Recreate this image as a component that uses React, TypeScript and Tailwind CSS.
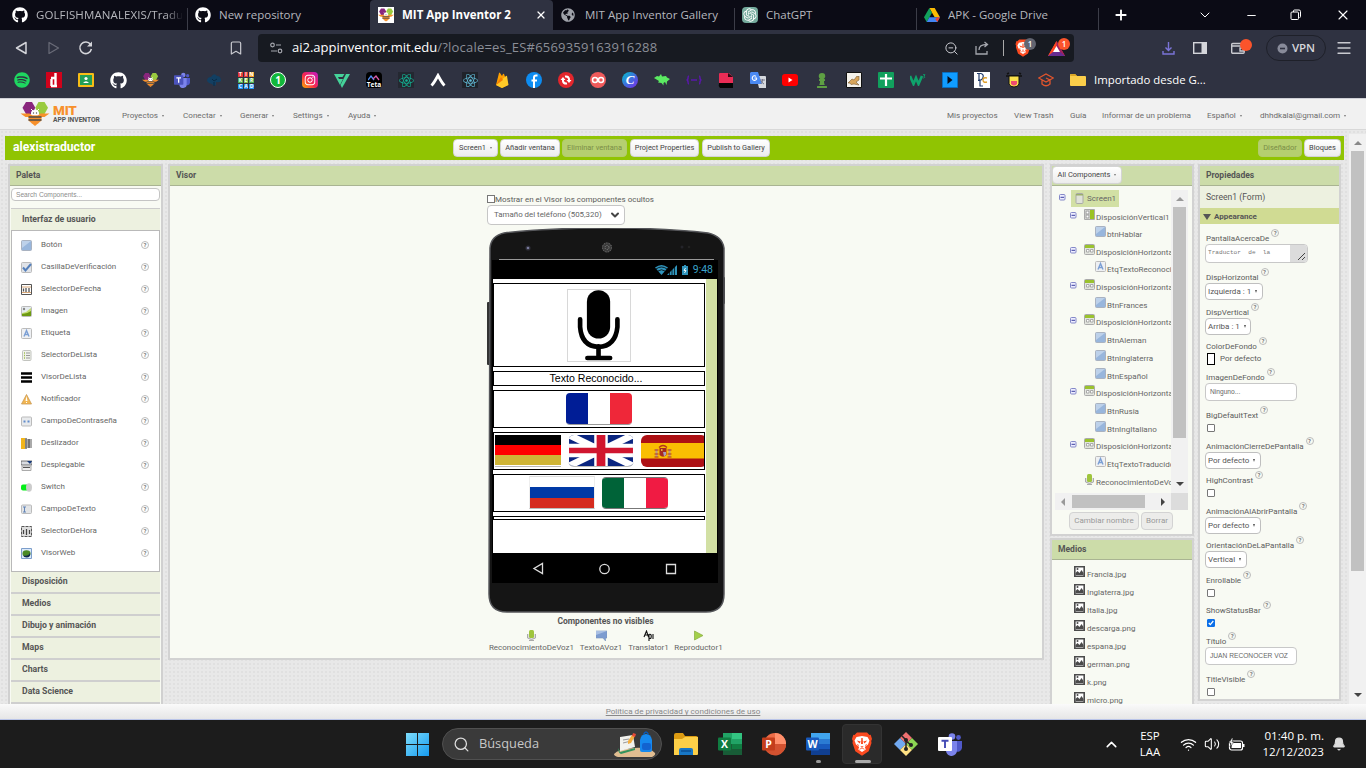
import React from "react";
import type { ReactNode } from "react";
import { FaGithub, FaSpotify, FaReact, FaInstagram, FaChessPawn, FaGlobeAmericas } from "react-icons/fa";
import { RiOpenaiFill } from "react-icons/ri";
import { Bookmark, ChevronDown, ChevronUp, ZoomOut, Bell, Wifi, Volume2, Plus, Minus, X, Menu, Search } from "lucide-react";

const ui = "font-['Open_Sans','Noto_Sans',sans-serif]";

function Lion({ size }: { size: number }) {
  return (
    <svg width={size} height={size} viewBox="0 0 24 24">
      <path d="M7 .5h10l2.500 2.500 1.200-.2L22 7l-.8 2 .3 2-2.800 8.200L12 23.800l-6.700-4.600L2.500 11l.3-2L2 7l1.300-4.200L4.500 3z" fill="#fb4a20" />
      <path d="M6.500 5L12 4l5.500 1 2 3.500-1.500 4-3.200 2.500 1 2.500L12 20l-3.800-2.500 1-2.500L6 12.500 4.500 8.500z" fill="#fff" />
      <path d="M6.800 8.600l4 1-1.300 1.900zM17.200 8.600l-4 1 1.300 1.900zM10.300 14.300h3.400L12 15.700zM11.300 6h1.400l.3 6h-2z" fill="#fb4a20" />
      <path d="M9.500 17.300L12 16l2.500 1.300M7 12.500l2 1M17 12.500l-2 1" stroke="#fb4a20" strokeWidth=".8" fill="none" />
    </svg>
  );
}

function Bee({ w, h }: { w: number; h: number }) {
  return (
    <svg width={w} height={h} viewBox="0 0 29 24">
      <path d="M5.500 0h6l3.300 5.800L11.500 12h-6L2 5.800z" fill="#89267d" />
      <path d="M18 0h6l3.500 5.800L24 12h-6l-3.200-6.200z" fill="#99cb3f" />
      <path d="M0 11.500h9l3 2h5l3-2h9l-5 3.500H5z" fill="#f7902b" />
      <path d="M10.500 12q-.5-4 4-4t4 4l-1.500 1.500h-5z" fill="#fff" />
      <path d="M10.500 7l2 2M18.500 7l-2 2" stroke="#fff" />
      <circle cx="13" cy="11" r=".7" fill="#555" />
      <circle cx="16" cy="11" r=".7" fill="#555" />
      <path d="M8 13.500h13v5l-3.500 3h-6L8 18.500z" fill="#f7902b" />
      <path d="M8 15h13M8 18h13" stroke="#4b4b4b" strokeWidth="1.400" />
      <path d="M11 21h7l-3.500 3z" fill="#f7902b" />
    </svg>
  );
}

function Teams({ size, white = false }: { size: number; white?: boolean }) {
  return (
    <svg width={size} height={size} viewBox="0 0 24 24">
      <circle cx="14" cy="4.500" r="3.300" fill="#7b83eb" />
      <circle cx="20.500" cy="5.500" r="2.400" fill="#5059c9" />
      <path d="M16 9h8v7a4.500 4.500 0 0 1-7 3z" fill="#5059c9" />
      <path d="M8 9h11v9a5.500 5.500 0 0 1-11 1z" fill="#7b83eb" />
      <rect x="0" y="5" width="14" height="14" rx="1" fill={white ? "#fff" : "#4b53bc"} />
      <path d="M3.500 8.800h7M7 8.800v7.200" stroke={white ? "#444bb5" : "#fff"} strokeWidth="1.900" />
    </svg>
  );
}

function Badge({ c, children }: { c: string; children: ReactNode }) {
  return <span className={`absolute flex h-3 w-3 items-center justify-center rounded-full text-[8px] font-semibold leading-none text-white ${c}`}>{children}</span>;
}

function Tab({ w, icon, label, active = false, line = true }: { w: string; icon: ReactNode; label: string; active?: boolean; line?: boolean }) {
  return (
    <div className={`relative flex h-[30px] shrink-0 items-center overflow-hidden ${w} ${active ? "rounded-t bg-[#2f3241] font-bold text-white" : "text-[#b6b7bd]"}`}>
      <span className="flex w-6 shrink-0 items-center">{icon}</span>
      <span className="flex-1 overflow-hidden whitespace-nowrap text-[11.5px] leading-[30px]">{label}</span>
      {active && <X size={12} strokeWidth={2.500} className="mr-[6px]" />}
      {line && <span className="mt-2 h-[23px] w-px bg-[#3c3d48]" />}
    </div>
  );
}

function Tabs() {
  return (
    <div className="flex h-[30px] bg-[#0b0b15]">
      <Tab w="w-[188px] pl-3 [&>span:nth-child(2)]:mr-1 [&>span:nth-child(2)]:tracking-[0.1px] [&>span:nth-child(2)]:[mask-image:linear-gradient(90deg,#000_88%,transparent)]" icon={<FaGithub size={16} color="#fff" />} label="GOLFISHMANALEXIS/Traductor" />
      <Tab w="w-[182px] pl-[7px]" icon={<FaGithub size={16} color="#fff" />} label="New repository" line={false} />
      <Tab w="w-[183px] pl-2" icon={<span className="bg-white"><Bee w={16} h={16} /></span>} label="MIT App Inventor 2" active line={false} />
      <Tab w="w-[182px] pl-[8px]" icon={<FaGlobeAmericas size={14} color="#9fa2aa" />} label="MIT App Inventor Gallery" />
      <Tab w="w-[182px] pl-[7px]" icon={<span className="rounded bg-[#74aa9c]"><RiOpenaiFill size={16} color="#fff" /></span>} label="ChatGPT" />
      <Tab
        w="w-[182px] pl-[7px]"
        icon={
          <svg width="16" height="14" viewBox="0 0 24 21">
            <path d="M8 0h8l8 14h-8z" fill="#fbbc04" />
            <path d="M8 0l4 7-8 14-4-7z" fill="#12a05c" />
            <path d="M8 14h16l-4 7H4z" fill="#4285f4" />
            <path d="M20 14h4l-4 7-3-4z" fill="#ea4335" />
          </svg>
        }
        label="APK - Google Drive"
      />
      <div className="flex items-center pl-[14px] text-white">
        <Plus size={16} strokeWidth={2.800} className="mr-[68px]" />
        <ChevronDown size={16} className="mr-[32px]" strokeWidth={1.500} />
        <Minus size={13} className="mr-[32px]" strokeWidth={1.800} />
        <svg width="12" height="12" viewBox="0 0 12 12" fill="none" stroke="#fff" className="mr-[33px]">
          <rect x="1" y="3" width="7.500" height="7.500" rx="1" />
          <path d="M3.500 3V2q0-1 1-1H9q1.500 0 1.500 1.500v5q0 1-1 1" />
        </svg>
        <X size={16} strokeWidth={1.700} />
      </div>
    </div>
  );
}

function Toolbar() {
  return (
    <div className="flex h-9 items-center bg-[#2f3241] text-[#c9cad0]">
      <svg width="100" height="16" viewBox="0 0 100 16" fill="none" className="shrink-0">
        <path d="M26 2.500v11L16.500 8z" stroke="#d4d5da" strokeWidth="1.500" strokeLinejoin="round" />
        <path d="M49 2.500v11L58.500 8z" stroke="#6a6c78" strokeWidth="1.200" strokeLinejoin="round" />
        <path d="M90.500 4.500a5.800 5.800 0 1 0 .9 4.500" stroke="#d4d5da" strokeWidth="1.500" />
        <path d="M92 1.500v5h-5z" fill="#d4d5da" />
      </svg>
      <Bookmark size={16} strokeWidth={1.800} className="ml-[128px] mr-[14px] shrink-0" />
      <div className="flex h-[28px] w-[816px] shrink-0 items-center rounded bg-[#171a21]">
        <svg width="13" height="12" viewBox="0 0 13 12" fill="none" stroke="#a4a6ad" strokeWidth="1.200" className="ml-3">
          <circle cx="2.500" cy="3" r="1.800" />
          <path d="M6 3h5M1 9h6" />
          <circle cx="10" cy="9" r="1.800" />
        </svg>
        <div className="ml-[9px] w-[642px] whitespace-nowrap text-[13px] text-[#8b8e97]">
          <span className="text-white">ai2.appinventor.mit.edu</span>
          <span className="tracking-[0.2px]">/?locale=es_ES#6569359163916288</span>
        </div>
        <ZoomOut size={15} className="ml-[10px]" strokeWidth={1.600} />
        <svg width="15" height="14" viewBox="0 0 15 14" fill="none" stroke="#a4a6ad" strokeWidth="1.300" className="ml-[16px]">
          <path d="M1 5v8h11v-3M4 9c0-4 3-5.500 8-5.500M9.500 1l3 2.500-3 2.500" />
        </svg>
        <span className="ml-[13px] h-4 w-px bg-[#aaa]" />
        <span className="relative ml-[10px] w-[18px]"><Lion size={18} /><Badge c="left-[10px] -top-px bg-[#626571]">1</Badge></span>
        <span className="relative ml-[16px] w-[17px]">
          <svg width="17" height="15" viewBox="0 0 17 15">
            <path d="M8.500 0L17 15H0z" fill="#ff4724" />
            <path d="M8.500 0L17 15H0l8.500-5z" fill="#9e1f63" />
            <path d="M8.500 0L0 15l5-4z" fill="#ff4724" />
            <path d="M0 15h17l-5-4H5z" fill="#662d91" />
            <path d="M8.500 5l3.500 6H5z" fill="#fff" />
          </svg>
          <Badge c="left-[10px] -top-[3px] bg-[#fb542b]">1</Badge>
        </span>
      </div>
      <svg width="13" height="13" viewBox="0 0 13 13" fill="none" stroke="#7b74d8" strokeWidth="1.400" className="ml-[88px] shrink-0">
        <path d="M6.500 0v8M3.500 5.500l3 3 3-3M1 9v3h11V9" />
      </svg>
      <svg width="14" height="12" viewBox="0 0 14 12" className="ml-[18px] shrink-0">
        <rect x=".7" y=".7" width="12.600" height="10.600" fill="none" stroke="#d4d5da" strokeWidth="1.400" />
        <path d="M8.500 1h5v10h-5z" fill="#d4d5da" />
      </svg>
      <span className="relative ml-[24px] shrink-0">
        <svg width="14" height="12" viewBox="0 0 14 12" fill="none" stroke="#c9cad0" strokeWidth="1.400">
          <rect x=".7" y="1.500" width="12.500" height="9.800" rx="1" />
          <path d="M1 4h12M13 6H9v3h4" />
        </svg>
        <span className="absolute -top-[3px] left-[9px] h-3 w-3 rounded-full bg-[#fb542b]" />
      </span>
      <span className="ml-[21px] flex h-[26px] w-[60px] shrink-0 items-center justify-center gap-1 rounded-full border border-[#1e2029] text-[11.500px] font-semibold text-[#d7d8dc]">
        <svg width="11" height="11" viewBox="0 0 11 11"><circle cx="5.500" cy="5.500" r="5" fill="#888b9a" /><path d="M3 5.500h5" stroke="#2f3241" strokeWidth="1.600" /></svg>
        VPN
      </span>
      <Menu size={18} className="ml-[9px] shrink-0" strokeWidth={1.700} />
    </div>
  );
}

const tink = ["#e53935", "#e53935", "#f59f2a", "#4caf50", "#8bc34a", "#4caf50", "#2196f3", "#1e88e5", "#2196f3"];
const marks: ReactNode[] = [
  <FaSpotify size={16} color="#1ed760" />,
  <svg width="16" height="16" viewBox="0 0 16 16"><path d="M0 0h16v16H0z" fill="#d0021b" /><path d="M9.500 1v14M5.500 7v7M5 6h4M5 14h6" stroke="#fff" strokeWidth="2.400" /></svg>,
  <svg width="16" height="14" viewBox="0 0 16 14"><rect width="16" height="14" rx="1" fill="#f7bd16" /><path d="M2 2h12v10H2z" fill="#229f57" /><circle cx="8" cy="5.500" r="1.600" fill="#fff" /><path d="M5 10q3-3.500 6 0z" fill="#fff" /></svg>,
  <FaGithub size={17} color="#fff" />,
  <Bee w={17} h={16} />,
  <Teams size={16} />,
  <svg width="16" height="14" viewBox="0 0 16 14"><path d="M1 8q0-4 4-4 3-5 6-1 4 0 4 5-2 2-5 1v3l-2 1-2-2-3-1z" fill="#123f62" /><path d="M6 6l2 2 3-2M8 9v4" stroke="#0b2a45" fill="none" /></svg>,
  <span className="grid h-4 w-4 grid-cols-3 gap-px text-center text-[5px] font-bold leading-[5px] text-white">
    {"TINKERCAD".split("").map((c, i) => (
      <span key={i} style={{ background: tink[i] }}>{c}</span>
    ))}
  </span>,
  <span className="flex h-4 w-4 items-center justify-center rounded-full border border-white bg-[#12b83b] text-[10px] font-bold text-white">1</span>,
  <span className="flex h-4 w-4 items-center justify-center rounded bg-[linear-gradient(45deg,#ffb000,#f7264c_45%,#c21bc8)]"><FaInstagram size={12} color="#fff" /></span>,
  <svg width="16" height="15" viewBox="0 0 16 15"><path d="M0 1h10.500l-2 3H4l1 2h4L6 12z" fill="#45d39a" /><path d="M12 1h4L8 15l-1.500-3z" fill="#45d39a" /></svg>,
  <span className="flex h-4 w-4 flex-col items-center justify-end rounded-sm bg-black text-[6.500px] font-bold leading-[7px] text-white">
    <svg width="12" height="6" viewBox="0 0 12 6" fill="none" strokeWidth="1.300"><path d="M0 5l3-4 3 4" stroke="#4e8ef7" /><path d="M5 4l3-3 3 4" stroke="#d95ba8" /></svg>Teta
  </span>,
  <span className="flex h-4 w-4 items-center justify-center bg-[#242831]"><FaReact size={15} color="#12b394" /></span>,
  <svg width="16" height="14" viewBox="0 0 16 14"><path d="M1.500 12.500Q4 10 8 2.500q4 7.500 6.500 10" fill="none" stroke="#fff" strokeWidth="2.800" /></svg>,
  <span className="flex h-4 w-4 items-center justify-center bg-[#20232a]"><FaReact size={15} color="#61bcd8" /></span>,
  <svg width="14" height="16" viewBox="0 0 14 16"><path d="M1 13L4 1q.5-1 1 0l2 3 1-2q.5-.5 1 0l4 11-6 3z" fill="#ffa000" /><path d="M1 13L11 4q1-.5 1 0l1.500 9L7 16z" fill="#ffca28" /><path d="M1 13l5-8 2 3z" fill="#f57c00" /></svg>,
  <svg width="16" height="16" viewBox="0 0 16 16"><circle cx="8" cy="8" r="8" fill="#0d8cf1" /><path d="M11.500 3.500H10q-2 0-2 2V16M5.500 8.500h5.500" stroke="#fff" strokeWidth="2" fill="none" /></svg>,
  <svg width="16" height="16" viewBox="0 0 16 16"><circle cx="8" cy="8" r="8" fill="#e3262c" /><path d="M5 7.500V9q.5 3 4 2.500M11 8.500V7q-.5-3-4-2.500" stroke="#fff" strokeWidth="2" fill="none" /><path d="M2.500 8L5 5l2.500 3zM13.500 8L11 11 8.500 8z" fill="#fff" /></svg>,
  <svg width="16" height="16" viewBox="0 0 16 16"><circle cx="8" cy="8" r="8" fill="#f05a5b" /><circle cx="5" cy="8" r="2.500" fill="none" stroke="#fff" strokeWidth="1.500" /><circle cx="11" cy="8" r="2.500" fill="none" stroke="#fff" strokeWidth="1.500" /></svg>,
  <span className="flex h-4 w-4 items-center justify-center rounded-full bg-[linear-gradient(135deg,#00c4cc,#4a5fe0_60%,#7d2ae8)] font-['Liberation_Serif',serif] text-[13px] font-bold italic text-white">C</span>,
  <svg width="16" height="12" viewBox="0 0 16 12"><path d="M0 4l3-2 2 .5L7 0l1 2.500 4-.5 1 1.500L16 5l-3 2.500-.5 3.500-1.500-3-1.500 1v2.500L7.500 9 4 8.500 5 7z" fill="#5bea62" /></svg>,
  <svg width="16" height="10" viewBox="0 0 16 10" fill="none" stroke="#5a17ac" strokeWidth="1.500"><path d="M3 1q-1 0-1 2T.5 5Q2 5 2 7t1 2M13 1q1 0 1 2t1.500 2Q14 5 14 7t-1 2M5 5h6" /></svg>,
  <svg width="16" height="16" viewBox="0 0 16 16"><path d="M1 2q0-1 1-1h9l4 4v6H1z" fill="#e92c55" /><path d="M1 11h14v5H2q-2-2-1-5z" fill="#050505" /><path d="M10 1l5 4h-5z" fill="#2b0a12" /></svg>,
  <svg width="16" height="16" viewBox="0 0 16 16"><path d="M6 4h9q1 0 1 1v11H9z" fill="#d5d8de" /><path d="M1 0h7l4 12H1q-1 0-1-1V1z" fill="#4a89f3" /><path d="M7 6H4.500M6.800 6.500A2.300 2.300 0 1 1 6 4.300" fill="none" stroke="#fff" strokeWidth="1.100" /><path d="M10 8h5M12.500 7v1q0 3-2 4M11 9q1 2 3 3" stroke="#778" fill="none" /></svg>,
  <svg width="16" height="12" viewBox="0 0 16 12"><rect width="16" height="12" rx="3" fill="#f00" /><path d="M6.500 3.500l4 2.500-4 2.500z" fill="#fff" /></svg>,
  <FaChessPawn size={16} color="#5e9f43" />,
  <svg width="16" height="16" viewBox="0 0 16 16"><path d="M.5.500h15v15H.5z" fill="#f5f2ec" stroke="#111" /><path d="M2 11l4-4 2 1 3-4 1 1 1-1v4l-3 2 3 3-5-1-3 .5-1-1.500z" fill="#d9a55a" stroke="#795a35" strokeWidth=".6" /></svg>,
  <svg width="16" height="16" viewBox="0 0 16 16"><rect width="16" height="16" rx="1" fill="#11a05d" /><path d="M2 6.500h12M8 2v12" stroke="#fff" strokeWidth="2.200" /></svg>,
  <svg width="16" height="12" viewBox="0 0 16 12" fill="none" stroke="#0fa36b"><path d="M0 2l3.500 8L6 4l2.500 6L12 2" strokeWidth="2.600" /><path d="M13 .7h2l-1 1.500q2 1-.7 2" strokeWidth=".9" /></svg>,
  <svg width="16" height="16" viewBox="0 0 16 16"><path d="M.5.500h15v15H.5z" fill="#109cff" stroke="#0a6fc0" /><path d="M5.500 4v8l5-4z" fill="#060d1b" /></svg>,
  <svg width="16" height="16" viewBox="0 0 16 16"><path d="M0 0h16v16H0z" fill="#fff" /><path d="M5 1.500v7M3 1.500h4q3 1 2 4-1 3-5 3M6 9v5h3" stroke="#233d6c" fill="none" strokeWidth="1.200" /><path d="M13 6q-4-1-4 2t4 2" stroke="#e0a02c" fill="none" strokeWidth="1.400" /></svg>,
  <svg width="16" height="16" viewBox="0 0 16 16"><path d="M1 2l2-1M15 2l-2-1M0 4h16" stroke="#111" strokeWidth="1.500" /><path d="M3 4h10v8q-1 3-5 3t-5-3z" fill="#f9e04b" stroke="#111" /><path d="M5 9h6v3q-3 3-6 0z" fill="#ee4a70" /></svg>,
  <svg width="16" height="14" viewBox="0 0 16 14" fill="none" stroke="#e2552d" strokeWidth="1.300"><path d="M.7 5L8 1l7.300 4L8 9zM4 7v4q4 3.500 8 0V7M12 7l-4-2" /></svg>,
];

function Bookmarks() {
  return (
    <div className="flex h-[33px] items-start border-b border-[#cfd0d6] bg-[#2f3241] pl-[6px] pt-[6px]">
      {marks.map((m, i) => (
        <span key={i} className="flex h-4 w-8 shrink-0 items-center justify-center">{m}</span>
      ))}
      <svg width="16" height="14" viewBox="0 0 16 14" className="ml-2 mt-px shrink-0"><path d="M0 2q0-1 1-1h4l2 2h8q1 0 1 1v8q0 1-1 1H1q-1 0-1-1z" fill="#fbce4a" /><path d="M1 1h4l2 2H0z" fill="#dca625" /></svg>
      <span className="ml-2 whitespace-nowrap text-[11.400px] leading-4 text-white">Importado desde G...</span>
    </div>
  );
}

function Caret() {
  return <span className="ml-[4px] inline-block h-0 w-0 border-x-[1.500px] border-t-[2.500px] border-x-transparent border-t-[#777] align-middle" />;
}

function SiteHeader() {
  const L = "shrink-0 whitespace-nowrap";
  return (
    <div className="flex h-[31px] items-center border-b border-[#d8d8d8] bg-[#f1f1f1] pl-5 pt-[2px] text-[8.100px] text-[#6c6c6c]">
      <div className="flex w-[102px] shrink-0 items-center pb-[2px]">
        <Bee w={30} h={24} />
        <div className="ml-[3px] leading-none">
          <div className="text-[13.500px] font-black leading-[10px] tracking-[-0.2px] text-[#f7902b]">MIT</div>
          <div className="mt-[2px] whitespace-nowrap text-[6.650px] font-bold leading-[7px] text-[#555]">APP INVENTOR</div>
        </div>
      </div>
      <span className={`${L} w-[61px]`}>Proyectos<Caret /></span>
      <span className={`${L} w-[57px]`}>Conectar<Caret /></span>
      <span className={`${L} w-[53px]`}>Generar<Caret /></span>
      <span className={`${L} w-[55px]`}>Settings<Caret /></span>
      <span className={`${L} w-[599px]`}>Ayuda<Caret /></span>
      <span className={`${L} w-[67px]`}>Mis proyectos</span>
      <span className={`${L} w-[56px]`}>View Trash</span>
      <span className={`${L} w-[32px]`}>Guía</span>
      <span className={`${L} w-[105px]`}>Informar de un problema</span>
      <span className={`${L} w-[53px]`}>Español<Caret /></span>
      <span className={L}>dhhdkalal@gmail.com<Caret /></span>
    </div>
  );
}

function Btn({ w, children, off = false }: { w: string; children: ReactNode; off?: boolean }) {
  return (
    <span className={`flex h-[18px] shrink-0 items-center justify-center whitespace-nowrap rounded-sm border text-[7.450px] ${w} ${off ? "border-[#b3cc6c] bg-[#b5cf70] text-[#7b8e48]" : "border-[#d4d4d4] bg-linear-to-b from-white to-[#ececec] text-[#444]"}`}>{children}</span>
  );
}

function Title({ children }: { children: ReactNode }) {
  return <div className="flex h-[20px] shrink-0 items-center border-b border-[#a9b492] bg-[#ccdca9] pl-[6px] text-[8.550px] font-bold text-[#555]">{children}</div>;
}

const Q = ({ c = "" }: { c?: string }) => <span className={`flex h-2 w-2 shrink-0 items-center justify-center rounded-full border border-[#bbb] text-[6px] font-bold leading-none text-[#777] ${c}`}>?</span>;

const icon: Record<string, ReactNode> = {
  box: <><rect x=".5" y=".5" width="10" height="10" rx="1" fill="#98b6dc" stroke="#a9b2c0" /><path d="M1 1h9L1 8z" fill="#bdd1ea" /></>,
  check: <><rect x=".5" y=".5" width="10" height="10" rx="1" fill="#e0e3e8" stroke="#bbb" /><path d="M2 5.500l2.500 3L10 2" stroke="#5580bb" strokeWidth="2" fill="none" /></>,
  date: <><path d="M.5.500h10v10H.5z" fill="#fff" stroke="#555" /><path d="M1 3h9M1 8.500h9" stroke="#d9a878" /><path d="M2.500 4.500v3M5 4v4M8 4v4" stroke="#555" strokeWidth="1.300" /></>,
  img: <><rect x=".5" y=".5" width="10" height="10" rx="1" fill="#e6ecf0" stroke="#bbb" /><circle cx="3" cy="3" r="1.200" fill="#888" /><path d="M1 7l4-1 5-4v8H1z" fill="#c1db6f" /><path d="M1 8q5 0 9-3v5H1z" fill="#6d9a12" /></>,
  a: <><rect x=".5" y=".5" width="10" height="10" rx="1" fill="#eef0f3" stroke="#bbb" /><path d="M3 8.500l2.500-6 2.500 6M4 6.500h3" stroke="#7b9fd4" strokeWidth="1.400" fill="none" /></>,
  list: <><rect x="1.500" y=".5" width="8.500" height="10" rx="1" fill="#f0f2ec" stroke="#c2c4bf" /><path d="M3 3h1M3 5.500h1M3 8h1" stroke="#9fbf4c" strokeWidth="1.300" /><path d="M5 3h4M5 5.500h4M5 8h4" stroke="#999" /></>,
  lines: <path d="M0 1.500h11M0 5.500h11M0 9.500h11" stroke="#000" strokeWidth="2.600" />,
  warn: <><path d="M5.500.500L10.500 10H.5z" fill="#f2b652" stroke="#c99b55" strokeWidth=".8" /><path d="M5.500 2l1 5h-2zM5 8h1v1H5z" fill="#fff" /></>,
  pass: <><rect x=".5" y="1" width="10" height="9" rx="1" fill="#e8eaec" stroke="#bbb" /><path d="M2.500 5.500h2M6.500 5.500h2" stroke="#608ccb" strokeWidth="2" /></>,
  slide: <><path d="M0 0h4v11H0z" fill="#f1b51c" /><path d="M4 1h7v9H4z" fill="#aaa" /><path d="M5 0v11" stroke="#777" strokeWidth="1.600" /><path d="M8 1v9" stroke="#666" strokeWidth="1.600" /></>,
  drop: <><path d="M0 1h11v4H0z" fill="#d9dce1" stroke="#444" strokeWidth=".7" /><path d="M6 1h5L9 4z" fill="#15397a" /><path d="M1 6h9v4.500H1z" fill="#eee" stroke="#aaa" /><path d="M2 7.500h7" stroke="#555" /></>,
  sw: <><rect x="0" y="2.500" width="8" height="6" rx="2" fill="#05ee19" /><ellipse cx="8" cy="5.500" rx="3" ry="4.200" fill="#ccc" /></>,
  text: <><rect x=".5" y="1" width="10" height="8.500" rx="1" fill="#e2e4e6" stroke="#bbb" /><path d="M2 3h3M3.500 3v5M2 8h3" stroke="#6285b8" /></>,
  time: <><path d="M.5.500h10v10H.5z" fill="#ddd" stroke="#555" strokeDasharray="3 1" /><path d="M2.500 4v4M5.500 3v6M8.500 4v4" stroke="#444" strokeWidth="1.200" /></>,
  web: <><path d="M.5.500h10v10H.5z" fill="#dceafa" stroke="#7c9ecb" /><ellipse cx="5.500" cy="5.500" rx="4" ry="3.300" fill="#4a8a25" /><path d="M2 7.500q6 1 7-3 1 5-3.500 5-2.500 0-3.500-2z" fill="#12294d" /></>,
  vert: <><path d="M.5.500h10v10H.5z" fill="#e9ebe5" stroke="#aaa" /><path d="M6 1h4v9H6z" fill="#9ac222" /><rect x="2" y="2" width="3" height="3" fill="#fff" stroke="#999" /><rect x="2" y="6" width="3" height="3" fill="#fff" stroke="#999" /></>,
  hor: <><rect x=".5" y=".5" width="10" height="10" rx="1" fill="#e2e4de" stroke="#aaa" /><path d="M1 1h9v3H1z" fill="#9ac22e" /><path d="M2.500 5.500h2.500v2.500H2.500zM6.500 5.500h2.500v2.500H6.500z" fill="#fff" stroke="#999" strokeWidth=".8" /></>,
  screen: <><rect x="2" y=".5" width="7" height="10" rx="1" fill="#dfe2d8" stroke="#aaa" /><path d="M2 1h7v1.500H2z" fill="#9aae6b" /></>,
  mic: <><path d="M1.500 4v4q4 3 8 0V4" fill="#ddd" stroke="#aaa" /><rect x="3" y="0" width="5" height="8" rx="1.500" fill="#9fc53c" /><path d="M3 10.500h5" stroke="#aaa" /></>,
  bubble: <><path d="M0 1h11v7H9.500v3L7 8H0z" fill="#7d9cd0" stroke="#7993bd" strokeWidth=".6" /><path d="M0 1h11L0 5z" fill="#a9bfe3" /></>,
  trans: <path d="M1 7l2.500-6 2 6M2 5h3M6 4v7M6 4.500q3-1 2 3.500-1 1-2 0M10 4v5" stroke="#111" strokeWidth="1.100" fill="none" />,
  play: <path d="M1.500 1L10 5.500 1.500 10z" fill="#a3d04a" stroke="#86ac3e" strokeWidth=".7" />,
  media: <><path d="M.800.800h9.400v9.400H.800z" fill="#fff" stroke="#4b4b4b" strokeWidth="1.600" /><path d="M1.500 9V7l2-2 2 2 2-3 2 3v2z" fill="#4b4b4b" /><circle cx="3.500" cy="3" r="1" fill="#4b4b4b" /></>,
};
const Ico = ({ k, s = 11 }: { k: string; s?: number }) => <svg width={s} height={s} viewBox="0 0 11 11" className="shrink-0">{icon[k]}</svg>;

const palette: [string, string][] = [
  ["box", "Botón"], ["check", "CasillaDeVerificación"], ["date", "SelectorDeFecha"], ["img", "Imagen"], ["a", "Etiqueta"],
  ["list", "SelectorDeLista"], ["lines", "VisorDeLista"], ["warn", "Notificador"], ["pass", "CampoDeContraseña"], ["slide", "Deslizador"],
  ["drop", "Desplegable"], ["sw", "Switch"], ["text", "CampoDeTexto"], ["time", "SelectorDeHora"], ["web", "VisorWeb"],
];

function Palette() {
  return (
    <div className="mr-[5px] flex h-[540px] w-[155px] shrink-0 flex-col overflow-hidden border-2 border-b-0 border-[#d0d0d0] bg-[#f8faf3]">
      <Title>Paleta</Title>
      <div className="ml-px mt-[2px] flex h-[13px] w-[149px] shrink-0 items-center rounded-sm border border-[#c4c4c4] bg-white pl-1 font-['Liberation_Sans',sans-serif] text-[6.650px] text-[#8c8c8c]">Search Components...</div>
      <div className="ml-px mt-[7px] flex h-[22px] w-[149px] shrink-0 items-center border-t border-[#ccc] bg-[#edf1e0] pl-[11px] text-[8.700px] font-bold text-[#555]">Interfaz de usuario</div>
      <div className="ml-px h-[342px] w-[149px] shrink-0 border border-[#b9b9b9] bg-white pt-[3px]">
        {palette.map(([k, t]) => (
          <div key={t} className="flex h-[22px] items-center pl-[9px] text-[8px] text-[#666]">
            <Ico k={k} />
            <span className="ml-[9px] w-[100px]">{t}</span>
            <Q />
          </div>
        ))}
      </div>
      {["Disposición", "Medios", "Dibujo y animación", "Maps", "Charts", "Data Science"].map((t) => (
        <div key={t} className="ml-px flex h-[22px] w-[149px] shrink-0 items-center border-b-2 border-[#cfcfcf] bg-[#edf1e0] pl-[11px] text-[8.700px] font-bold text-[#555]">{t}</div>
      ))}
    </div>
  );
}

const Uk = () => (
  <svg width="66" height="32" viewBox="0 0 66 32" className="shrink-0 rounded-md border-b border-[#bbb]">
    <path d="M0 0h66v32H0z" fill="#0a2580" />
    <path d="M0 0l66 32M66 0L0 32" stroke="#fff" strokeWidth="7" />
    <path d="M33 0v32M0 16h66" stroke="#fff" strokeWidth="14" />
    <path d="M33 0v32" stroke="#d0152f" strokeWidth="9" />
    <path d="M0 16h66" stroke="#d0152f" strokeWidth="5.500" />
  </svg>
);
const Spain = () => (
  <svg width="66" height="32" viewBox="0 0 66 32" className="shrink-0 rounded-md">
    <path d="M0 0h66v32H0z" fill="#ad1014" />
    <path d="M0 8h66v15.500H0z" fill="#f9be02" />
    <path d="M14.500 14h2v8h-2zM27.500 14h2v8h-2z" fill="#b98" />
    <path d="M13.500 15h4M26.500 15h4M13.500 19h4M26.500 19h4M13.500 22h4M26.500 22h4M18 12.500q4-4 8 0" stroke="#b5331c" strokeWidth="1.200" fill="none" />
    <path d="M18.500 13h7v7q-3.500 3.500-7 0z" fill="#a52a22" />
    <path d="M22 17h3v3l-2 1.500z" fill="#a9a0bd" />
    <path d="M20 14h1.500v2H20z" fill="#e3b23a" />
  </svg>
);

const Row = ({ c, children }: { c: string; children?: ReactNode }) => <div className={`mb-1 flex w-[212px] shrink-0 items-center overflow-hidden border border-black ${c}`}>{children}</div>;

function Phone() {
  return (
    <div className="relative ml-[316px] mt-[3px] h-[385px] w-[240px]">
      <svg width="240" height="385" viewBox="0 0 240 385" className="absolute left-0 top-0">
        <rect x="1" y="74" width="4" height="63" rx="1" fill="#333" />
        <rect x="235" y="49" width="4" height="27" rx="1" fill="#333" />
        <path d="M4 20Q5 8 18 5Q60 0 120 0T222 5Q236 8 238 20V366Q238 384 220 384H21Q3 384 3 366z" fill="#151515" stroke="#55565a" strokeWidth="1.500" />
        <path d="M13 31.500h215" stroke="#999" />
        <circle cx="42" cy="20" r="2.600" fill="#2c2c36" /><circle cx="42" cy="20" r="1.300" fill="#77799b" />
        <circle cx="121" cy="19.500" r="5" fill="#3a3a3a" /><circle cx="121" cy="19.500" r="4.500" fill="none" stroke="#777" strokeWidth="1" strokeDasharray="1 1.500" /><circle cx="121" cy="19.500" r="2" fill="none" stroke="#888" strokeDasharray="1 1" />
        <circle cx="196" cy="19" r="1.500" fill="#24242a" /><circle cx="203" cy="19" r="1.300" fill="#222" />
      </svg>
      <div className="relative ml-[6px] flex h-[355px] w-[226px] flex-col pt-[32px]">
        <div className="flex h-[19px] shrink-0 items-center justify-end bg-black pr-[5px] text-[#3aa2c9]">
          <svg width="34" height="12" viewBox="0 0 34 12" fill="#2f93bb" className="mr-[4px]">
            <path d="M0 3.500Q6.500-1.500 13 3.500L6.500 11z" /><path d="M1 5q5.500-4 11 0M3 7q3.500-2.500 7 0" fill="none" stroke="#000" strokeWidth=".8" />
            <path d="M12 11L22 1v10z" /><path d="M14.500 0v12M17 0v12M19.500 0v12" stroke="#000" strokeWidth=".7" />
            <path d="M27 2h2V1h2v1h2v9h-6z" /><path d="M30.500 4l-1.500 2.500h2L29.500 9" stroke="#fff" strokeWidth=".9" fill="none" />
          </svg>
          <span className="text-[10.500px]">9:48</span>
        </div>
        <div className="flex h-[274px] shrink-0 bg-black pl-px pr-px">
          <div className="flex w-[213px] shrink-0 flex-col bg-white pt-1">
            <Row c="h-[84px] justify-center">
              <svg width="64" height="73" viewBox="0 0 64 73" className="border border-[#d8d8d8] bg-white">
                <rect x="19.500" y="0" width="24" height="50" rx="12" fill="#000" />
                <path d="M12.500 30v8Q14 58 31.500 58.500 49 58 51 38v-8M31.500 58v10M20 70h23.500" fill="none" stroke="#000" strokeWidth="4.800" strokeLinecap="round" />
              </svg>
            </Row>
            <Row c="h-[15px] justify-center pr-[6px] font-['Liberation_Sans',sans-serif] text-[10.600px] leading-none text-black">Texto Reconocido...</Row>
            <Row c="h-[38px] pl-[72px] pb-px">
              <div className="flex h-[32px] w-[66px] overflow-hidden rounded border-b border-[#999] bg-white"><i className="mr-[22px] w-[22px] bg-[#001d96]" /><i className="w-[22px] bg-[#ef2739]" /></div>
            </Row>
            <Row c="h-[38px] gap-[7px] pl-px pb-px">
              <div className="flex h-[32px] w-[66px] shrink-0 flex-col border-b border-[#bbb]"><i className="flex-1 bg-black" /><i className="flex-1 bg-[#f00]" /><i className="flex-1 bg-[#cfb537]" /></div>
              <Uk /><Spain />
            </Row>
            <Row c="h-[38px] gap-[7px] pl-[35px] pb-px">
              <div className="flex h-[33px] w-[66px] shrink-0 flex-col border border-t-[#ddd] border-x-[#eee] border-b-[#bbb]"><i className="flex-1 bg-white" /><i className="flex-1 bg-[#0039a6]" /><i className="flex-1 bg-[#d52b1e]" /></div>
              <div className="flex h-[32px] w-[66px] overflow-hidden rounded border-y border-[#777] bg-white"><i className="mr-[22px] w-[22px] bg-[#006338]" /><i className="w-[22px] bg-[#f01b43]" /></div>
            </Row>
            <Row c="h-[4px]" />
          </div>
          <div className="w-[11px] bg-[#d2e0a4]" />
        </div>
        <div className="flex h-[30px] shrink-0 items-center bg-black">
          <svg width="226" height="30" viewBox="0 0 226 30" fill="none" stroke="#ddd" strokeWidth="1.300"><path d="M50.500 10.500v10L42 15.500z" /><circle cx="112.500" cy="16" r="4.700" /><path d="M174.500 11.500h9v9h-9z" /></svg>
        </div>
      </div>
    </div>
  );
}

function Viewer() {
  return (
    <div className="mr-[6px] h-[496px] w-[876px] shrink-0 border-2 border-[#d2d2d2] bg-[#f8faf3]">
      <Title>Visor</Title>
      <div className="ml-[317px] mt-[9px] flex h-[10px] items-center text-[8px] text-[#5c5c5c]"><i className="mb-[3px] h-[8px] w-[8px] border border-[#777] bg-white" />Mostrar en el Visor los componentes ocultos</div>
      <div className="ml-[317px] flex h-[20px] w-[138px] items-center justify-between rounded-sm border border-[#c6c6c6] bg-white pl-[6px] pr-[3px] text-[7.900px] text-[#666]">Tamaño del teléfono (505,320)<ChevronDown size={12} strokeWidth={4} className="text-[#444]" /></div>
      <Phone />
      <div className="mr-[1px] mt-[2px] text-center text-[8.500px] font-bold leading-[12px] text-[#555]">Componentes no visibles</div>
      <div className="mt-[3px] flex pl-[319px] text-[8px] leading-3 text-[#666]">
        {[["mic", "ReconocimientoDeVoz1", "w-[85px] mr-[6px]"], ["bubble", "TextoAVoz1", "w-[42px] mr-[6px]"], ["trans", "Translator1", "w-[41px] mr-[5px]"], ["play", "Reproductor1", "w-[49px]"]].map(([k, t, w]) => (
          <div key={t} className={`flex shrink-0 flex-col items-center gap-px whitespace-nowrap ${w}`}><Ico k={k} />{t}</div>
        ))}
      </div>
    </div>
  );
}

const tree: [number, string, string, boolean, string][] = [
  [0, "screen", "Screen1", true, "h-[18px]"], [1, "vert", "DisposiciónVertical1", true, "h-[17px]"], [2, "box", "btnHablar", false, "h-[18px]"],
  [1, "hor", "DisposiciónHorizontal1", true, "h-[17px]"], [2, "a", "EtqTextoReconocido", false, "h-[18px]"],
  [1, "hor", "DisposiciónHorizontal2", true, "h-[18px]"], [2, "box", "BtnFrances", false, "h-[17px]"],
  [1, "hor", "DisposiciónHorizontal3", true, "h-[18px]"], [2, "box", "BtnAleman", false, "h-[18px]"], [2, "box", "BtnInglaterra", false, "h-[18px]"],
  [2, "box", "BtnEspañol", false, "h-[17px]"], [1, "hor", "DisposiciónHorizontal4", true, "h-[18px]"], [2, "box", "BtnRusia", false, "h-[18px]"],
  [2, "box", "BtnIngItaliano", false, "h-[17px]"], [1, "hor", "DisposiciónHorizontal5", true, "h-[18px]"], [2, "a", "EtqTextoTraducido", false, "h-[18px]"],
  [1, "mic", "ReconocimientoDeVoz1", false, "h-[18px]"],
];
const pads = ["pl-[4px]", "pl-[15px]", "pl-[25px]"];
const Toggle = () => <svg width="7" height="7" viewBox="0 0 7 7" className="mb-[3px] shrink-0"><rect x=".5" y=".5" width="5.500" height="5.500" rx="1" fill="#eef" stroke="#8488c8" /><path d="M1.500 3.300h3.500" stroke="#3a3f9e" /></svg>;

function Tree() {
  return (
    <div className="mb-[2px] h-[372px] w-[144px] border-2 border-[#d2d2d2] bg-[#f8faf3]">
      <div className="h-[20px] border-b border-[#a9b492] bg-[#ccdca9]"><Btn w="w-[70px]">All Components<span className="ml-1 h-0 w-0 border-x-[1.500px] border-t-[2px] border-x-transparent border-t-[#777]" /></Btn></div>
      <div className="ml-[3px] mt-[4px] flex h-[303px]">
        <div className="w-[116px] overflow-hidden text-[8.050px] text-[#666]">
          {tree.map(([d, k, t, tg, h], i) => (
            <div key={i} className={`${h} ${pads[d]}`}>
              {i === 0 ? (
                <div className="flex h-[17px] items-center"><Toggle /><span className="ml-[5px] flex h-[17px] w-[48px] items-center bg-[#d2e0a4] pl-[3px]"><Ico k={k} /><span className="ml-[2px] pt-[2px]">{t}</span></span></div>
              ) : (
                <div className="flex h-[18px] items-center">
                  {d === 1 && (tg ? <Toggle /> : <span className="w-[7px] shrink-0" />)}
                  <span className={`mb-[5px] flex shrink-0 ${d === 1 ? "ml-[7px]" : "ml-[15px]"}`}><Ico k={k} /></span>
                  <span className="ml-px whitespace-nowrap pt-[2px]">{t}</span>
                </div>
              )}
            </div>
          ))}
        </div>
        <div className="flex w-[17px] flex-col items-center bg-[#f1f1f1]">
          <i className="mt-[7px] h-0 w-0 border-x-[4px] border-b-[4px] border-x-transparent border-b-[#999]" />
          <i className="mt-[6px] h-[231px] w-[13px] bg-[#c1c1c1]" />
          <i className="mt-[44px] h-0 w-0 border-x-[4px] border-t-[4px] border-x-transparent border-t-[#444]" />
        </div>
      </div>
      <div className="ml-[3px] flex h-[17px] w-[133px] items-center bg-[#f1f1f1]">
        <i className="ml-[6px] h-0 w-0 border-y-[4px] border-r-[4px] border-y-transparent border-r-[#999]" />
        <i className="ml-[7px] h-[13px] w-[73px] bg-[#c1c1c1]" />
        <i className="ml-[16px] h-0 w-0 border-y-[4px] border-l-[4px] border-y-transparent border-l-[#444]" />
        <i className="ml-auto h-[17px] w-[17px] bg-[#dcdcdc]" />
      </div>
      <div className="ml-[17px] mt-[2px] flex gap-[2px] text-[8px] text-[#999]">
        <span className="flex h-[18px] w-[70px] items-center justify-center whitespace-nowrap rounded-sm border border-[#d3d3d3] bg-[#ececea]">Cambiar nombre</span>
        <span className="flex h-[18px] w-[32px] items-center justify-center rounded-sm border border-[#d3d3d3] bg-[#ececea]">Borrar</span>
      </div>
    </div>
  );
}

function Media() {
  return (
    <div className="h-[166px] w-[144px] overflow-hidden border-2 border-b-0 border-[#d2d2d2] bg-[#f8faf3]">
      <Title>Medios</Title>
      <div className="pl-[22px] pt-[5px] text-[8px] text-[#666]">
        {["Francia.jpg", "Inglaterra.jpg", "Italia.jpg", "descarga.png", "espana.jpg", "german.png", "k.png", "micro.png"].map((t) => (
          <div key={t} className="flex h-[18px] items-center"><span className="mb-[5px]"><Ico k="media" /></span><span className="ml-[2px] pt-[2px]">{t}</span></div>
        ))}
      </div>
    </div>
  );
}

const props: [string, string, string, string, string][] = [
  ["PantallaAcercaDe", "h-[39px]", "area", "Traductor  de  la", ""],
  ["DispHorizontal", "h-[35px]", "sel", "Izquierda : 1", "w-[58px]"],
  ["DispVertical", "h-[34px]", "sel", "Arriba : 1", "w-[46px]"],
  ["ColorDeFondo", "h-[31px]", "color", "Por defecto", ""],
  ["ImagenDeFondo", "h-[38px]", "in", "Ninguno...", ""],
  ["BigDefaultText", "h-[31px]", "cb", "", ""],
  ["AnimaciónCierreDePantalla", "h-[34px]", "sel", "Por defecto", "w-[56px]"],
  ["HighContrast", "h-[31px]", "cb", "", ""],
  ["AnimaciónAlAbrirPantalla", "h-[34px]", "sel", "Por defecto", "w-[56px]"],
  ["OrientaciónDeLaPantalla", "h-[35px]", "sel", "Vertical", "w-[42px]"],
  ["Enrollable", "h-[30px]", "cb", "", ""],
  ["ShowStatusBar", "h-[31px]", "cb", "on", ""],
  ["Título", "h-[38px]", "in", "JUAN RECONOCER VOZ", ""],
  ["TitleVisible", "h-[25px]", "cb", "", ""],
];

function Control({ kind, v, w }: { kind: string; v: string; w: string }) {
  if (kind === "area")
    return (
      <div className="mt-px flex h-[19px] w-[103px] justify-between overflow-hidden rounded-sm border border-[#c8c8c8] bg-white pl-[2px] font-['Liberation_Mono',monospace] text-[6.100px] leading-[15px] text-[#777]">
        <span className="whitespace-pre">{v}</span>
        <svg width="17" height="17" viewBox="0 0 17 17"><path d="M0 0h17v17H0z" fill="#dcdcdc" /><path d="M8 15l7-7M12 15l3-3" stroke="#444" /></svg>
      </div>
    );
  if (kind === "sel")
    return <div className={`mt-px flex h-[17px] items-center whitespace-nowrap rounded-sm border border-[#bfbfbf] bg-white pl-[2px] text-[8px] text-[#555] ${w}`}>{v}<span className="ml-[4px] h-0 w-0 border-x-[1.500px] border-t-[3px] border-x-transparent border-t-[#555]" /></div>;
  if (kind === "in") return <div className="mt-px flex h-[18px] w-[92px] items-center rounded-sm border border-[#c8c8c8] bg-white pl-1 font-['Liberation_Sans',sans-serif] text-[6.650px] text-[#666]">{v}</div>;
  if (kind === "color") return <div className="mt-[2px] flex h-[12px] items-center pl-[2px]"><i className="mr-[5px] h-[12px] w-[8px] border border-black bg-white" />{v}</div>;
  return (
    <div className={`ml-[2px] mt-[4px] h-[8px] w-[8px] rounded-[1px] border ${v ? "border-[#0b6fe8] bg-[#0b6fe8]" : "border-[#777] bg-white"}`}>
      {v && <svg width="6" height="6" viewBox="0 0 6 6"><path d="M.8 3l1.500 1.600L5.300 1" stroke="#fff" strokeWidth="1.200" fill="none" /></svg>}
    </div>
  );
}

function Properties() {
  return (
    <div className="h-[537px] w-[143px] shrink-0 border-2 border-[#d2d2d2] bg-[#f8faf3]">
      <Title>Propiedades</Title>
      <div className="flex h-[22px] items-center bg-[#edf1e0] pl-[6px] text-[8.600px] text-[#555]">Screen1 (Form)</div>
      <div className="flex h-[16px] items-center bg-[#d0db93] pl-[3px] pt-px text-[8px] font-bold text-[#555]"><i className="mr-[3px] h-0 w-0 border-x-[4px] border-t-[6px] border-x-transparent border-t-[#555]" />Appearance</div>
      <div className="pl-[5px] pt-[9px] text-[8px] text-[#5c5c5c]">
        {props.map(([l, h, k, v, w]) => (
          <div key={l} className={h}>
            <div className="flex h-[10px] items-center pl-px"><span className="whitespace-nowrap pt-[2px]">{l}</span><Q c="ml-[2px] mb-[10px]" /></div>
            <Control kind={k} v={v} w={w} />
          </div>
        ))}
      </div>
    </div>
  );
}

function Designer() {
  return (
    <div className="flex h-[574px] overflow-hidden bg-[#e8e8e8] bg-[radial-gradient(#e0e0e0_0.8px,transparent_1px)] bg-[length:4px_4px]">
      <div className="w-[1349px] shrink-0 pl-[5px] pt-[6px]">
        <div className="flex h-6 w-[1339px] items-center bg-[#90c402] pl-2">
          <span className="w-[440px] pb-[2px] text-[12.200px] font-bold text-white">alexistraductor</span>
          <div className="flex w-[805px] gap-[2px]">
            <Btn w="w-[45px]">Screen1<span className="ml-1 h-0 w-0 border-x-[1.500px] border-t-[2px] border-x-transparent border-t-[#777]" /></Btn>
            <Btn w="w-[60px]">Añadir ventana</Btn>
            <Btn w="w-[65px] mr-px" off>Eliminar ventana</Btn>
            <Btn w="w-[69px] mr-px">Project Properties</Btn>
            <Btn w="w-[68px]">Publish to Gallery</Btn>
          </div>
          <Btn w="w-[44px] mr-[2px]" off>Diseñador</Btn>
          <Btn w="w-[37px]">Bloques</Btn>
        </div>
        <div className="ml-[3px] mt-[4px] flex items-start">
          <Palette />
          <Viewer />
          <div className="mr-[4px] w-[144px] shrink-0"><Tree /><Media /></div>
          <Properties />
        </div>
      </div>
      <div className="mt-1 flex w-[17px] flex-col items-center bg-[#f1f1f1]">
        <i className="mt-[7px] h-0 w-0 border-x-[4px] border-b-[4px] border-x-transparent border-b-[#888]" />
        <i className="mt-[6px] h-[420px] w-[13px] bg-[#c1c1c1]" />
        <i className="mt-[122px] h-0 w-0 border-x-[4px] border-t-[4px] border-x-transparent border-t-[#444]" />
      </div>
    </div>
  );
}

function Office({ c, l, d }: { c: string; l: string; d: "sheet" | "round" | "doc" }) {
  return (
    <svg width="24" height="24" viewBox="0 0 24 24">
      {d === "round" ? (
        <><circle cx="13" cy="12" r="11" fill="#ed6c47" /><path d="M13 1a11 11 0 0 1 11 11H13z" fill="#ff8f6b" /><path d="M3 17a11 11 0 0 0 21-5H13z" fill="#d35230" /></>
      ) : d === "sheet" ? (
        <><path d="M5 1h19v22H5z" fill="#21a366" /><path d="M14 1h10v6H14z" fill="#33c481" /><path d="M5 12h9v11H5z" fill="#185c37" /><path d="M14 12h10v5H14z" fill="#107c41" /><path d="M14 17h10v6H14z" fill="#185c37" /></>
      ) : (
        <><path d="M5 1h19v6H5z" fill="#41a5ee" /><path d="M5 7h19v5H5z" fill="#2b7cd3" /><path d="M5 12h19v5H5z" fill="#185abd" /><path d="M5 17h19v6H5z" fill="#103f91" /></>
      )}
      <rect x="0" y="5.500" width="13" height="13" rx="1" fill={c} />
      <text x="6.500" y="15.800" textAnchor="middle" fontSize="10.500" fontWeight="700" fontFamily="Open Sans" fill="#fff">{l}</text>
    </svg>
  );
}

function Taskbar() {
  const cell = "flex h-12 w-11 shrink-0 items-center justify-center";
  return (
    <div className="flex h-12 items-center bg-[#1c1c1c] text-white">
      <svg width="23" height="24" viewBox="0 0 23 24" className="ml-[406px] shrink-0">
        <defs><linearGradient id="win" x2="1" y2="1"><stop stopColor="#7ddcfb" /><stop offset="1" stopColor="#169bf0" /></linearGradient></defs>
        <path d="M0 1h11v11H0zM12 1h11v11H12zM0 13h11v11H0zM12 13h11v11H12z" fill="url(#win)" />
      </svg>
      <div className="ml-[13px] flex h-8 w-[220px] shrink-0 items-center rounded-full border border-[#505050] bg-[#3a3a3a] pl-[10px] pr-[5px]">
        <Search size={17} strokeWidth={1.800} className="text-[#ddd]" />
        <span className="ml-[9px] flex-1 text-[12.800px] text-[#c8c8c8]">Búsqueda</span>
        <svg width="42" height="26" viewBox="0 0 42 26">
          <path d="M0 23Q4 18 20 17t21 5q1 2-3 4H4q-4-1-4-3z" fill="#e0bd91" />
          <path d="M6 6l13-2 2 12-15 4z" fill="#f2f2ee" /><path d="M4 17l2 4 15-4v2L7 23q-3-1-3-6z" fill="#33935c" /><path d="M9 9l6-1M9 12l8-2" stroke="#999" />
          <path d="M14 10l4-6 3 1-4 7-3 1z" fill="#f5ad3c" /><path d="M19 2l3 1-1 3-3-1z" fill="#e84a38" />
          <path d="M26 19V9q1-6 6-6t6 6v10q0 2-2 2h-8q-2 0-2-2z" fill="#1689ee" /><rect x="28" y="12" width="9" height="7" rx="2" fill="#1263d0" /><path d="M29.500 3.500q2.500-5 5 0" stroke="#0b59b5" fill="none" strokeWidth="1.500" />
        </svg>
      </div>
      <span className={`${cell} ml-[2px]`}><svg width="24" height="24" viewBox="0 0 24 24"><path d="M0 3q0-2 2-2h7l2 3h11q2 0 2 2v5H0z" fill="#dc9b12" /><path d="M0 7h8l3-2h13v17q0 1-1 1H0z" fill="#fccf48" /><path d="M5 23v-5q0-2 2-2h10q2 0 2 2v5z" fill="#1777c6" /><path d="M7 19h10" stroke="#0b4f94" strokeWidth="1.500" /></svg></span>
      <span className={cell}><Office c="#107c41" l="X" d="sheet" /></span>
      <span className={cell}><Office c="#c43e1c" l="P" d="round" /></span>
      <span className={`${cell} relative`}><Office c="#185abd" l="W" d="doc" /><i className="absolute bottom-[5px] left-5 h-[3px] w-[5px] rounded-full bg-[#999]" /></span>
      <span className={cell}><span className="relative flex h-10 w-10 items-center justify-center rounded border border-[#333] bg-[#2a2a2a]"><Lion size={24} /><i className="absolute bottom-0 left-3 h-[3px] w-4 rounded-full bg-[#aaa]" /></span></span>
      <span className={cell}>
        <svg width="24" height="24" viewBox="0 0 24 24"><path d="M12 0l6 6-6 6-6-6z" fill="#f07070" /><path d="M6 6l6 6-6 6-6-6z" fill="#71a9f0" /><path d="M18 6l6 6-6 6-6-6z" fill="#8bd653" /><path d="M12 12l6 6-6 6-6-6z" fill="#ffe183" /><path d="M8 4l4 4v9M12 9l5 4" stroke="#222" strokeWidth="1.500" fill="none" /><circle cx="12" cy="8" r="2" fill="#222" /><circle cx="12" cy="17" r="2" fill="#222" /><circle cx="17" cy="13" r="2" fill="#222" /></svg>
      </span>
      <span className={cell}><Teams size={24} white /></span>
      <ChevronUp size={17} strokeWidth={2.200} className="ml-[131px] shrink-0" />
      <div className="ml-[17px] w-[26px] shrink-0 text-center text-[11.400px] leading-4"><div>ESP</div><div>LAA</div></div>
      <Wifi size={17} className="ml-[17px] shrink-0" strokeWidth={1.800} />
      <Volume2 size={16} className="ml-[7px] shrink-0" strokeWidth={1.600} />
      <svg width="17" height="13" viewBox="0 0 17 13" className="ml-[8px] shrink-0"><rect x="1.500" y="3" width="13" height="9" rx="2" fill="none" stroke="#fff" strokeWidth="1.200" /><path d="M4 5h9v5H3.500zM15 6h1.500v3H15z" fill="#fff" /><path d="M4 0L1 5h2L2 9l4-5H4L5 0z" fill="#fff" stroke="#1c1c1c" strokeWidth=".5" /></svg>
      <div className="ml-[6px] w-[73px] shrink-0 whitespace-nowrap text-right text-[11.600px] leading-4"><div>01:40 p. m.</div><div>12/12/2023</div></div>
      <Bell size={14} className="ml-[8px] shrink-0" fill="#ddd" stroke="#ddd" />
    </div>
  );
}

export default function App() {
  return (
    <div className="h-[768px] w-[1366px] overflow-hidden bg-[#1c1c1c] font-['Roboto',sans-serif]">
      <div className={ui}><Tabs /><Toolbar /><Bookmarks /></div>
      <SiteHeader />
      <Designer />
      <div className="flex h-4 items-center justify-center border-b border-[#b9c4e8] bg-linear-to-b from-[#fafafa] to-[#e6e6e6] text-[8.100px] text-[#888] underline">Política de privacidad y condiciones de uso</div>
      <div className={ui}><Taskbar /></div>
    </div>
  );
}
